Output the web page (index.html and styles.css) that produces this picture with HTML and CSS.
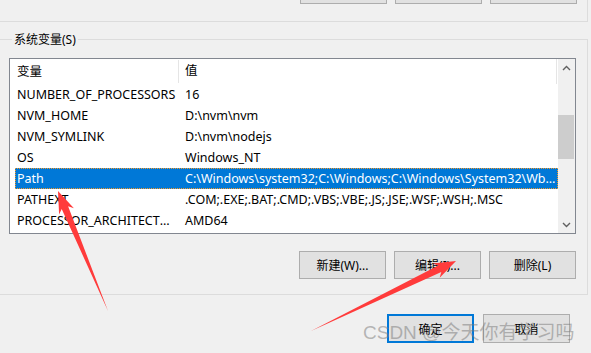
FILE: index.html
```html
<!DOCTYPE html>
<html lang="zh-CN">
<head>
    <meta charset="UTF-8">
    <title>环境变量</title>
    <link rel="stylesheet" href="styles.css">
</head>
<body>
    <div class="top-group">
        <div class="top-buttons">
            <button class="btn"></button>
            <button class="btn"></button>
            <button class="btn"></button>
        </div>
    </div>

    <fieldset class="sys-group">
        <legend>系统变量(S)</legend>

        <div class="listbox">
            <div class="list-main">
                <div class="list-head">
                    <div class="col-name">变量</div>
                    <div class="col-value">值</div>
                </div>
                <div class="row"><div class="col-name">NUMBER_OF_PROCESSORS</div><div class="col-value">16</div></div>
                <div class="row"><div class="col-name">NVM_HOME</div><div class="col-value">D:\nvm\nvm</div></div>
                <div class="row"><div class="col-name">NVM_SYMLINK</div><div class="col-value">D:\nvm\nodejs</div></div>
                <div class="row"><div class="col-name">OS</div><div class="col-value">Windows_NT</div></div>
                <div class="row selected"><div class="col-name">Path</div><div class="col-value">C:\Windows\system32;C:\Windows;C:\Windows\System32\Wbem;C:\Windows\System32\WindowsPowerShell</div></div>
                <div class="row"><div class="col-name">PATHEXT</div><div class="col-value">.COM;.EXE;.BAT;.CMD;.VBS;.VBE;.JS;.JSE;.WSF;.WSH;.MSC</div></div>
                <div class="row"><div class="col-name">PROCESSOR_ARCHITECTURE</div><div class="col-value">AMD64</div></div>
            </div>
            <div class="scrollbar">
                <div class="scroll-btn">
                    <svg width="9" height="6" viewBox="0 0 9 6"><path d="M1 5 L4.5 1.5 L8 5" fill="none" stroke="#606060" stroke-width="1.4"/></svg>
                </div>
                <div class="scroll-track">
                    <div class="scroll-thumb"></div>
                </div>
                <div class="scroll-btn">
                    <svg width="9" height="6" viewBox="0 0 9 6"><path d="M1 1 L4.5 4.5 L8 1" fill="none" stroke="#606060" stroke-width="1.4"/></svg>
                </div>
            </div>
        </div>

        <div class="actions">
            <button class="btn">新建(W)...</button>
            <button class="btn">编辑(I)...</button>
            <button class="btn">删除(L)</button>
        </div>
    </fieldset>

    <div class="dialog-buttons">
        <button class="btn primary">确定</button>
        <button class="btn">取消</button>
    </div>

    <!-- red markup arrows drawn over the dialog -->
    <svg class="arrows" width="591" height="353" viewBox="0 0 591 353">
        <polygon fill="#ff3b3b" points="58,191 73.9,208.2 68.1,206.3 108,311 61.7,208.9 59.1,214.4"/>
        <polygon fill="#ff3b3b" points="456,261 439.7,277.8 441.3,272 311,331 438.3,265.6 432.7,263.4"/>
    </svg>

    <div class="watermark">CSDN @今天你有学习吗</div>
</body>
</html>
```

FILE: styles.css
```css
body {
    margin: 0;
    width: 591px;
    height: 353px;
    overflow: hidden;
    position: relative;
    background: #f0f0f0;
    color: #000;
    font-family: "Noto Sans", "Noto Sans CJK SC", sans-serif;
    font-size: 12.5px;
}

.btn {
    box-sizing: border-box;
    width: 87px;
    height: 28px;
    margin: 0;
    padding: 0;
    background: #e1e1e1;
    border: 1px solid #adadad;
    color: #000;
    font-family: inherit;
    font-size: 12px;
}

/* the group above, only its bottom edge is visible */
.top-group {
    display: flow-root;
    box-sizing: border-box;
    width: 588px;
    height: 22px;
    border-right: 1px solid #dcdcdc;
    border-bottom: 1px solid #dcdcdc;
}

.top-buttons {
    display: flex;
    gap: 8px;
    margin-top: -24px;
    padding-left: 300px;
}

.sys-group {
    box-sizing: border-box;
    width: 588px;
    margin: 9px 0 0 0;
    padding: 10px 11px 15px 9px;
    border: 1px solid #dcdcdc;
    border-left: none;
    min-width: 0;
}

.sys-group legend {
    margin-left: 3px;
    padding: 0 2px;
    font-size: 12px;
    line-height: 17px;
}

.listbox {
    box-sizing: border-box;
    height: 176px;
    display: flex;
    border: 1px solid #828790;
    background: #fff;
}

.list-main {
    flex: 1;
    min-width: 0;
    padding-left: 5px;
}

.list-head,
.row {
    display: flex;
    white-space: nowrap;
}

.list-head {
    height: 25px;
    line-height: 24px;
    border-right: 1px solid #e5e5e5;
    margin-right: 1px;
}

.list-head .col-name {
    border-right: 1px solid #e5e5e5;
    margin: 1px 0;
    line-height: 23px;
}

.col-name {
    box-sizing: border-box;
    width: 164px;
    flex-shrink: 0;
    padding-left: 2px;
    padding-right: 2px;
    overflow: hidden;
    text-overflow: ellipsis;
}

.col-value {
    flex: 1;
    min-width: 0;
    padding-left: 6px;
    overflow: hidden;
    text-overflow: ellipsis;
}

.row {
    height: 21px;
    line-height: 21px;
}

.row.selected {
    background: #0078d7;
    color: #fff;
    outline: 1px dotted #f59a2a;
    outline-offset: -1px;
}

.scrollbar {
    width: 17px;
    display: flex;
    flex-direction: column;
    background: #f0f0f0;
}

.scroll-btn {
    height: 17px;
    display: flex;
    align-items: center;
    justify-content: center;
}

.scroll-track {
    flex: 1;
    padding-top: 39px;
}

.scroll-thumb {
    height: 44px;
    margin-right: 1px;
    background: #cdcdcd;
}

.actions {
    display: flex;
    justify-content: flex-end;
    gap: 8px;
    margin-top: 17px;
}

.dialog-buttons {
    display: flex;
    justify-content: flex-end;
    gap: 9px;
    margin-top: 19px;
    padding-right: 21px;
}

.dialog-buttons .btn {
    height: 29px;
}

.btn.primary {
    border: 2px solid #0078d7;
}

.arrows {
    position: absolute;
    left: 0;
    top: 0;
    pointer-events: none;
}

.watermark {
    position: absolute;
    left: 363px;
    top: 319px;
    font-family: "Liberation Sans", "Noto Sans CJK SC", sans-serif;
    font-size: 19px;
    line-height: 28px;
    color: rgba(120, 120, 120, 0.5);
    white-space: nowrap;
    pointer-events: none;
}
```
